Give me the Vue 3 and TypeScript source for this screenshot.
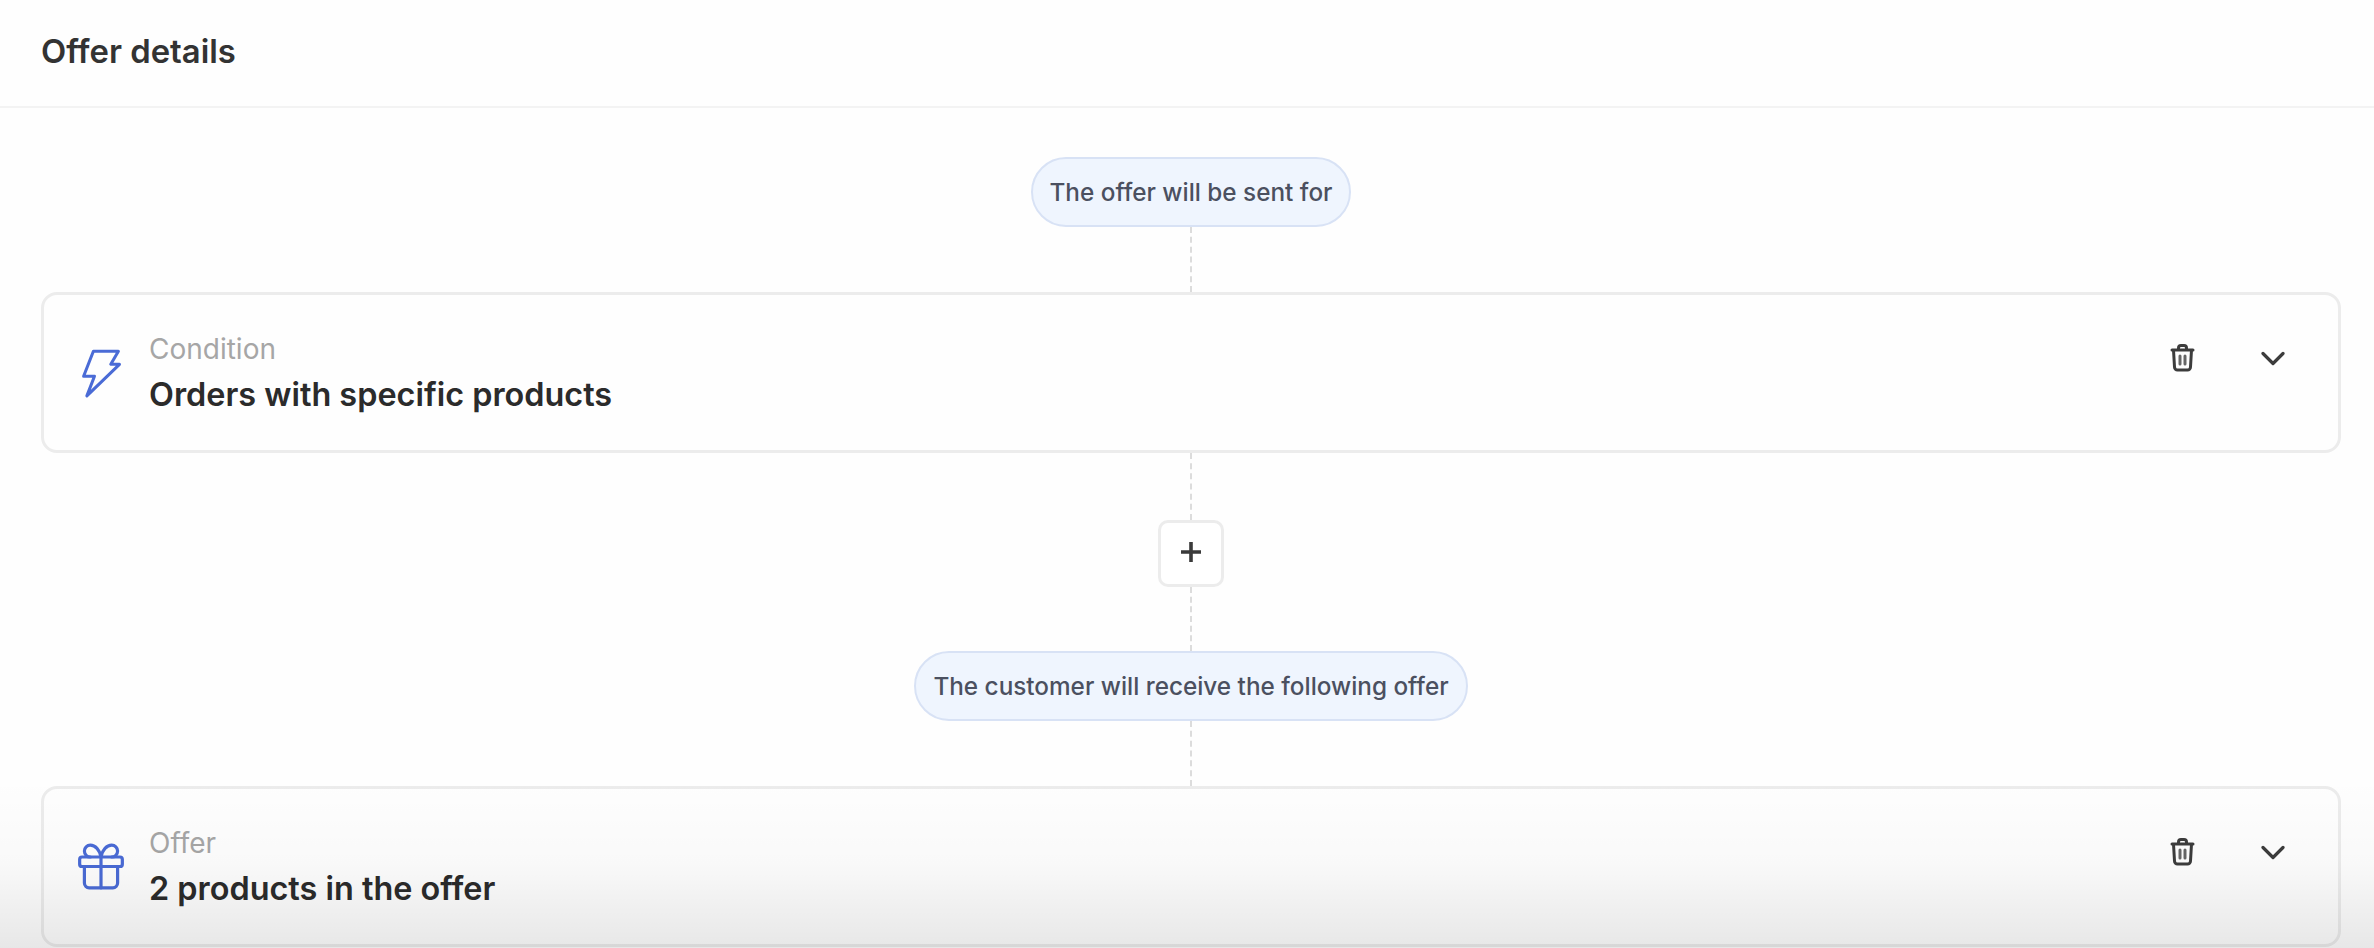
<template>
  <div class="page">
    <header class="page-header">
      <h2>Offer details</h2>
    </header>

    <main class="flow">
      <div class="pill">The offer will be sent for</div>
      <div class="connector"></div>

      <section class="card">
        <div class="card-icon">
          <svg width="42" height="50" viewBox="0 0 38 46" fill="none" stroke="#4a6bd6" stroke-width="2.8" stroke-linejoin="round" stroke-linecap="round">
            <path d="M12 3H35L28 15H36L6 44L13 26H3Z" />
          </svg>
        </div>
        <div class="card-text">
          <span class="card-label">Condition</span>
          <span class="card-title">Orders with specific products</span>
        </div>
        <div class="card-actions">
          <svg width="25" height="28" viewBox="0 0 25 28" fill="none" stroke="#3c3c3c" stroke-width="3" stroke-linejoin="round" stroke-linecap="round">
            <path d="M2 6H23M8.5 6V4A2.5 2.5 0 0 1 11 1.5H14A2.5 2.5 0 0 1 16.500 4V6M3.500 6L4.500 23A3 3 0 0 0 7.500 26H17.500A3 3 0 0 0 20.500 23L21.500 6" />
            <path d="M10 12V20M15 12V20" stroke-width="3" stroke="#666" />
          </svg>
          <svg width="24" height="15" viewBox="0 0 24 15" fill="none" stroke="#3c3c3c" stroke-width="3.2" stroke-linecap="round" stroke-linejoin="round">
            <path d="M2 2.500L12 12.500L22 2.500" />
          </svg>
        </div>
      </section>

      <div class="connector connector-short"></div>
      <button class="add-btn" type="button">
        <svg width="20" height="20" viewBox="0 0 20 20" stroke="#3a3a3a" stroke-width="3.6" fill="none">
          <path d="M10 0V20M0 10H20" />
        </svg>
      </button>
      <div class="connector connector-after-btn"></div>

      <div class="pill">The customer will receive the following offer</div>
      <div class="connector"></div>

      <section class="card">
        <div class="card-icon">
          <svg class="gift" width="46" height="47" viewBox="2.300 2.300 19.400 19.400" fill="none" stroke="#4a6bd6" stroke-width="1.350" stroke-linejoin="round" stroke-linecap="round">
            <rect x="3" y="8" width="18" height="4" rx="1" />
            <path d="M12 8V21" />
            <path d="M19 12V19A2 2 0 0 1 17 21H7A2 2 0 0 1 5 19V12" />
            <path d="M7.500 8A2.500 2.500 0 0 1 7.500 3C9.500 3 11.500 5 12 8C12.500 5 14.500 3 16.500 3A2.500 2.500 0 0 1 16.500 8" />
          </svg>
        </div>
        <div class="card-text">
          <span class="card-label">Offer</span>
          <span class="card-title">2 products in the offer</span>
        </div>
        <div class="card-actions">
          <svg width="25" height="28" viewBox="0 0 25 28" fill="none" stroke="#3c3c3c" stroke-width="3" stroke-linejoin="round" stroke-linecap="round">
            <path d="M2 6H23M8.5 6V4A2.5 2.5 0 0 1 11 1.5H14A2.5 2.5 0 0 1 16.500 4V6M3.500 6L4.500 23A3 3 0 0 0 7.500 26H17.500A3 3 0 0 0 20.500 23L21.500 6" />
            <path d="M10 12V20M15 12V20" stroke-width="3" stroke="#666" />
          </svg>
          <svg width="24" height="15" viewBox="0 0 24 15" fill="none" stroke="#3c3c3c" stroke-width="3.2" stroke-linecap="round" stroke-linejoin="round">
            <path d="M2 2.500L12 12.500L22 2.500" />
          </svg>
        </div>
      </section>
    </main>

    <div class="bottom-fade"></div>
  </div>
</template>

<script setup lang="ts">
</script>

<style>
html,
body {
  margin: 0;
  overflow: hidden;
  background: #fefefe;
}
</style>

<style scoped>
.page {
  position: relative;
  width: 2374px;
  height: 948px;
  overflow: hidden;
  background: #fefefe;
  font-family: Inter, "Liberation Sans", sans-serif;
}

.page-header {
  box-sizing: border-box;
  height: 108px;
  padding: 0 41px;
  display: flex;
  align-items: center;
  border-bottom: 2px solid #f3f3f3;
}

.page-header h2 {
  margin: 0 0 4px;
  font-size: 32.800px;
  font-weight: 600;
  color: #333333;
}

.flow {
  display: flex;
  flex-direction: column;
  align-items: center;
  padding: 49px 33px 0 41px;
}

.pill {
  box-sizing: border-box;
  height: 70px;
  padding: 0 17px;
  display: flex;
  align-items: center;
  border: 2px solid #d8e2f5;
  border-radius: 35px;
  background: #eff5fe;
  color: #4b5060;
  font-size: 24.300px;
  font-weight: 500;
  white-space: nowrap;
}

.connector {
  height: 65px;
  border-left: 2px dashed #dcdcdc;
}

.connector-short {
  height: 67px;
}

.connector-after-btn {
  height: 64px;
}

.card {
  box-sizing: border-box;
  width: 100%;
  height: 161px;
  flex-shrink: 0;
  display: flex;
  align-items: center;
  padding: 0 53px 0 36px;
  border: 3px solid #ececec;
  border-radius: 16px;
  background: #fefefe;
}

.card-icon {
  width: 69px;
  display: flex;
  align-items: center;
}

.gift {
  margin-left: -2px;
}

.card-text {
  display: flex;
  flex-direction: column;
  gap: 10px;
  flex: 1;
  padding-top: 2px;
}

.card-label {
  font-size: 28px;
  line-height: 32px;
  color: #a6a6a6;
}

.card-title {
  font-size: 32.400px;
  line-height: 40px;
  font-weight: 600;
  color: #2b2b2b;
}

.card-actions {
  align-self: flex-start;
  margin-top: 49px;
  display: flex;
  align-items: center;
  gap: 66px;
}

.add-btn {
  box-sizing: border-box;
  width: 66px;
  height: 67px;
  padding: 0 0 3px;
  display: flex;
  align-items: center;
  justify-content: center;
  border: 3px solid #ececec;
  border-radius: 10px;
  background: #ffffff;
}

.bottom-fade {
  position: absolute;
  left: 0;
  right: 0;
  bottom: 0;
  height: 170px;
  background: linear-gradient(to bottom, rgba(0, 0, 0, 0), rgba(0, 0, 0, 0.02) 50%, rgba(0, 0, 0, 0.09));
  pointer-events: none;
}
</style>
